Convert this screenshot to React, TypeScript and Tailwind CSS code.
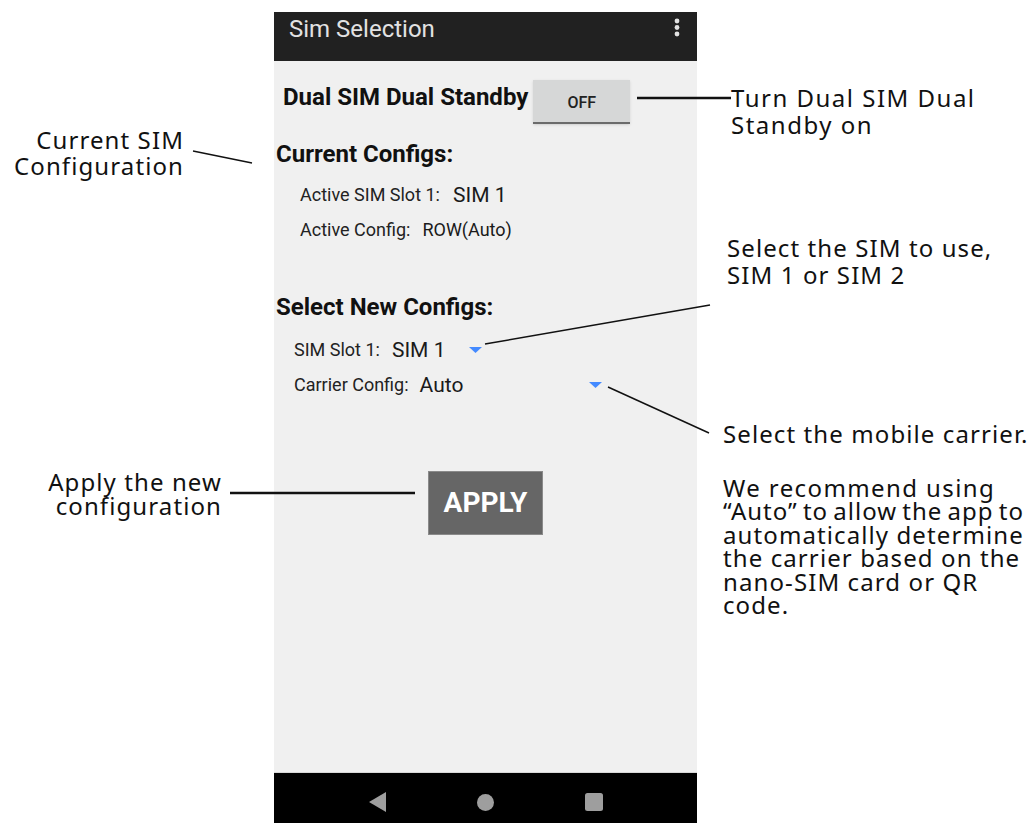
import React from 'react';

const Caret = () => (
    <svg width="13" height="6" viewBox="0 0 13 6" className="shrink-0">
        <path d="M0 0h13L6.5 6z" fill="#448aff" />
    </svg>
);

const Spinner = ({ value, width }: { value: string; width: string }) => (
    <div className={`flex items-center justify-between ${width}`}>
        <span className="text-[21px] leading-[26px] text-[#1a1a1a]">{value}</span>
        <Caret />
    </div>
);

const PhoneScreen = () => (
    <div className="ml-[274px] pt-[12px] w-[423px] h-full flex flex-col font-['Roboto',sans-serif]">
        {/* Toolbar */}
        <header className="h-[49px] bg-[#212121] flex items-start justify-between pl-[15px] pr-[17px] pt-[2px]">
            <span className="text-[24px] leading-[30px] text-[#e2e2e2]">Sim Selection</span>
            <svg width="6" height="20" viewBox="0 0 6 20" className="mt-[4px]">
                <circle cx="3" cy="3" r="2.4" fill="#e2e2e2" />
                <circle cx="3" cy="9.5" r="2.4" fill="#e2e2e2" />
                <circle cx="3" cy="16" r="2.4" fill="#e2e2e2" />
            </svg>
        </header>

        <main className="flex-1 bg-[#f0f0f0] flex flex-col text-[#111]">
            {/* Dual SIM toggle */}
            <div className="flex items-start pl-[9px] pt-[19px]">
                <span className="mt-[3px] text-[24px] leading-[28px] font-bold">Dual SIM Dual Standby</span>
                <button className="ml-[5px] w-[97px] h-[44px] bg-[#d6d7d7] border-b-2 border-[#6b6b6b] shadow-sm text-[16px] font-medium text-[#222] pt-[4px]">
                    OFF
                </button>
            </div>

            {/* Current configs */}
            <h2 className="mt-[16px] h-[28px] flex items-center pl-[2px] text-[24px] font-bold">Current Configs:</h2>
            <div className="mt-[13px] h-[28px] pl-[26px] flex items-center">
                <span className="text-[18px] leading-[22px] text-[#222]">Active SIM Slot 1:</span>
                <span className="ml-[13px] text-[21px] leading-[26px] text-[#1a1a1a]">SIM 1</span>
            </div>
            <div className="mt-[7px] h-[28px] pl-[26px] flex items-center">
                <span className="text-[18px] leading-[22px] text-[#222]">Active Config:</span>
                <span className="ml-[12px] text-[18px] leading-[22px] text-[#1a1a1a]">ROW(Auto)</span>
            </div>

            {/* New configs */}
            <h2 className="mt-[49px] h-[28px] flex items-center pl-[2px] text-[24px] font-bold">Select New Configs:</h2>
            <div className="mt-[15px] h-[28px] pl-[20px] flex items-center">
                <span className="text-[18px] leading-[22px] text-[#222]">SIM Slot 1:</span>
                <div className="ml-[12px]">
                    <Spinner value="SIM 1" width="w-[90px]" />
                </div>
            </div>
            <div className="mt-[7px] h-[28px] pl-[20px] flex items-center">
                <span className="text-[18px] leading-[22px] text-[#222]">Carrier Config:</span>
                <div className="ml-[11px]">
                    <Spinner value="Auto" width="w-[182px]" />
                </div>
            </div>

            {/* Apply */}
            <div className="mt-[72px] flex justify-center">
                <button className="w-[115px] h-[64px] bg-[#666666] border border-[#8a8a8a] text-white text-[28px] font-bold">
                    APPLY
                </button>
            </div>
        </main>

        {/* System nav */}
        <nav className="h-[51px] bg-black border-t border-[#d8d8d8] flex items-center justify-center gap-[91px] pt-[8px]">
            <svg width="17" height="20" viewBox="0 0 17 20">
                <path d="M17 0v20L0 10z" fill="#9e9e9e" />
            </svg>
            <svg width="17" height="17" viewBox="0 0 17 17">
                <circle cx="8.5" cy="8.5" r="8.5" fill="#9e9e9e" />
            </svg>
            <svg width="18" height="18" viewBox="0 0 18 18">
                <rect width="18" height="18" rx="2.5" fill="#9e9e9e" />
            </svg>
        </nav>
    </div>
);

const Callouts = () => (
    <div className="font-['Noto_Sans',sans-serif] text-[24px] tracking-[1.1px] text-[#111]">
        <div className="absolute left-0 top-[127px] w-[184px] text-right leading-[26px] whitespace-nowrap">
            Current SIM<br />Configuration
        </div>
        <div className="absolute left-[731px] top-[84px] leading-[27px] whitespace-nowrap tracking-[1.5px]">
            Turn Dual SIM Dual<br />Standby on
        </div>
        <div className="absolute left-[727px] top-[234px] leading-[27px] whitespace-nowrap">
            Select the SIM to use,<br />SIM 1 or SIM 2
        </div>
        <div className="absolute left-[723px] top-[420px] leading-[27px] whitespace-nowrap">
            Select the mobile carrier.
        </div>
        <div className="absolute left-[723px] top-[476px] leading-[23.4px] whitespace-nowrap">
            <span className="tracking-[1.4px]">We recommend using</span><br />
            <span className="tracking-[1px] [word-spacing:-2px]">“Auto” to allow the app to</span><br />
            automatically determine<br />
            the carrier based on the<br />
            nano-SIM card or QR<br />
            code.
        </div>
        <div className="absolute left-0 top-[470px] w-[222px] text-right leading-[24px] whitespace-nowrap">
            Apply the new<br />configuration
        </div>

        {/* leader lines */}
        <svg className="absolute inset-0 pointer-events-none" width="1032" height="823">
            <line x1="193" y1="151" x2="252" y2="163" stroke="#111" strokeWidth="1.4" />
            <line x1="637" y1="98" x2="731" y2="98" stroke="#111" strokeWidth="2.3" />
            <line x1="485" y1="344" x2="710" y2="305" stroke="#111" strokeWidth="1.5" />
            <line x1="608" y1="387" x2="709" y2="433" stroke="#111" strokeWidth="1.5" />
            <line x1="230" y1="493" x2="415" y2="493" stroke="#111" strokeWidth="2.6" />
        </svg>
    </div>
);

export default function App() {
    return (
        <div className="relative w-[1032px] h-[823px] bg-white overflow-hidden">
            <PhoneScreen />
            <Callouts />
        </div>
    );
}
